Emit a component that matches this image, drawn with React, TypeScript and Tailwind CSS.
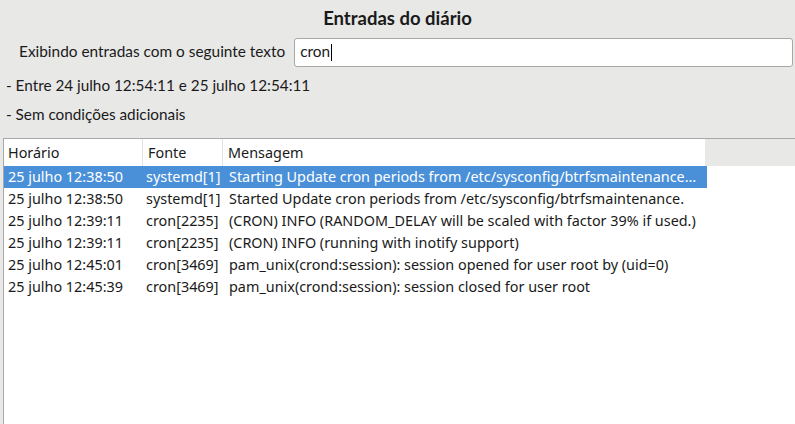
const rows = [
  { time: "25 julho 12:38:50", source: "systemd[1]", message: "Starting Update cron periods from /etc/sysconfig/btrfsmaintenance…" },
  { time: "25 julho 12:38:50", source: "systemd[1]", message: "Started Update cron periods from /etc/sysconfig/btrfsmaintenance." },
  { time: "25 julho 12:39:11", source: "cron[2235]", message: "(CRON) INFO (RANDOM_DELAY will be scaled with factor 39% if used.)" },
  { time: "25 julho 12:39:11", source: "cron[2235]", message: "(CRON) INFO (running with inotify support)" },
  { time: "25 julho 12:45:01", source: "cron[3469]", message: "pam_unix(crond:session): session opened for user root by (uid=0)" },
  { time: "25 julho 12:45:39", source: "cron[3469]", message: "pam_unix(crond:session): session closed for user root" },
];

export default function App() {
  return (
    <div className="w-[795px] h-[424px] overflow-hidden bg-[#e8e8e7] flex flex-col text-[#1a1a1a]">
      {/* Header area */}
      <div className="font-['Lato',sans-serif]">
        <h1 className="h-[37px] pt-[5px] text-center text-[18.5px] font-bold">Entradas do diário</h1>
        <div className="flex items-center h-[30px] pl-[19px] pr-[2px]">
          <span className="text-[15.4px] mr-[9px]">Exibindo entradas com o seguinte texto</span>
          <div className="flex-1 h-[29px] bg-white border border-[#a8a8a8] rounded-[3px] flex items-center pl-[5px] text-[15.4px]">
            cron<span className="inline-block w-px h-[17px] bg-black ml-px" />
          </div>
        </div>
        <p className="pl-[6px] mt-[4px] h-[29px] leading-[29px] text-[15.3px]">- Entre 24 julho 12:54:11 e 25 julho 12:54:11</p>
        <p className="pl-[6px] h-[29px] leading-[29px] text-[15.3px]">- Sem condições adicionais</p>
      </div>

      {/* Journal table */}
      <div className="mt-[9px] flex-1 ml-[3px] border-t border-l border-[#a8a8a8] bg-white font-['Noto_Sans',sans-serif] text-[14.4px]">
        <div className="flex h-[27px] items-center">
          <div className="w-[701px] flex h-full bg-white">
            <div className="w-[139px] pl-[4px] flex items-center border-r border-[#e2e2e2]">Horário</div>
            <div className="w-[80px] pl-[5px] flex items-center border-r border-[#e2e2e2]">Fonte</div>
            <div className="flex-1 pl-[5px] flex items-center">Mensagem</div>
          </div>
          <div className="flex-1 h-full bg-[#e8e8e7]" />
        </div>
        {rows.map((r, i) => (
          <div
            key={i}
            className={`flex w-[703px] h-[22px] items-center whitespace-nowrap ${i === 0 ? "bg-[#4a90d9] text-white" : ""}`}
          >
            <div className="w-[140px] pl-[4px]">{r.time}</div>
            <div className="w-[81px] pl-[2px]">{r.source}</div>
            <div className="flex-1 pl-[4px]">{r.message}</div>
          </div>
        ))}
      </div>
    </div>
  );
}
